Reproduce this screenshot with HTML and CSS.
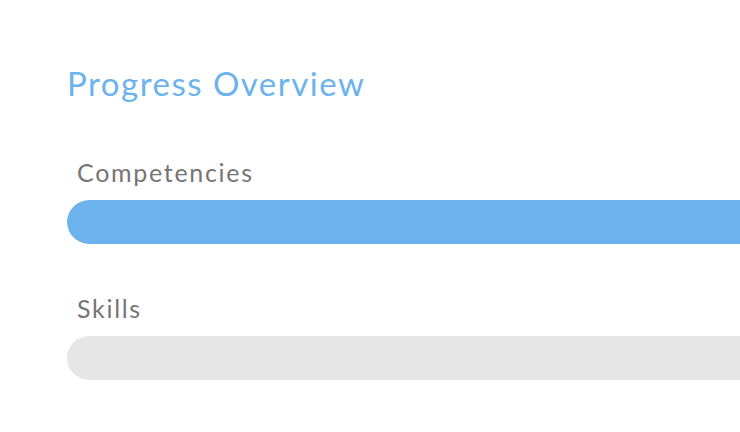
FILE: index.html
```html
<!DOCTYPE html>
<html lang="en">
<head>
  <meta charset="UTF-8" />
  <meta name="viewport" content="width=device-width, initial-scale=1.0" />
  <title>Progress Overview</title>
  <link rel="stylesheet" href="styles.css">
</head>
<body>
  <div class="overview">
    <h2 class="overview-title">Progress Overview</h2>

    <div class="progress-group">
      <div class="progress-label">Competencies</div>
      <div class="progress-track">
        <div class="progress-fill" style="width: 100%"></div>
      </div>
    </div>

    <div class="progress-group">
      <div class="progress-label">Skills</div>
      <div class="progress-track">
        <div class="progress-fill" style="width: 0%"></div>
      </div>
    </div>
  </div>
</body>
</html>
```

FILE: styles.css
```css
body {
  margin: 0;
  background: #ffffff;
  font-family: Lato, "Open Sans", sans-serif;
}
.overview {
  padding: 63px 0 0 67px;
  overflow: hidden;
}
.overview-title {
  margin: 0 0 54px 0;
  font-size: 33px;
  line-height: 40px;
  font-weight: 400;
  letter-spacing: 1.5px;
  color: #6cb3ee;
}
.progress-group {
  margin-bottom: 49px;
}
.progress-label {
  padding-left: 10px;
  margin-bottom: 13px;
  font-size: 25px;
  line-height: 30px;
  letter-spacing: 1.7px;
  color: #757575;
}
/* track runs on past the right edge of the page */
.progress-track {
  width: calc(100% + 200px);
  height: 44px;
  border-radius: 22px;
  background-color: #e6e6e6;
  overflow: hidden;
}
.progress-fill {
  height: 100%;
  border-radius: 22px;
  background-color: #6cb3ee;
}
```
